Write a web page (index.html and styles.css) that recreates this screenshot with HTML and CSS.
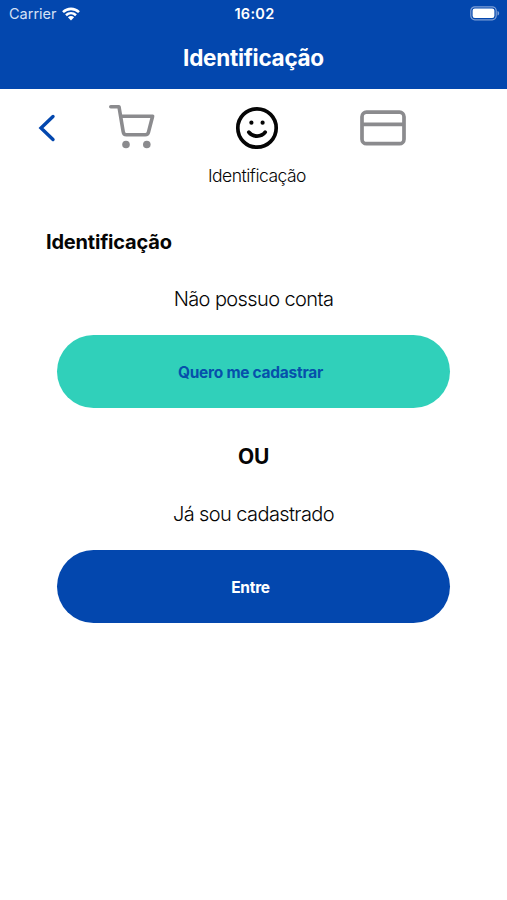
FILE: index.html
```html
<!DOCTYPE html>
<html lang="pt-BR">
<head>
<meta charset="utf-8">
<meta name="viewport" content="width=device-width, initial-scale=1">
<title>Identificação</title>
<link rel="stylesheet" href="styles.css">
</head>
<body>
<header class="header">
  <div class="status">
    <div class="carrier"><span>Carrier</span>
      <svg width="18" height="14" viewBox="0 0 18 14" fill="none" stroke="#fff" stroke-width="2.6"><path d="M1 5.1C5.6.8 12.4.8 17 5.1M4 8.2c2.9-2.6 7.1-2.6 10 0"/><path d="M5.9 10.2c1.8-1.5 4.4-1.5 6.2 0L9 13.5z" fill="#fff" stroke="none"/></svg>
    </div>
    <time class="time">16:02</time>
    <svg class="battery" width="30" height="15" viewBox="0 0 30 15"><rect x=".8" y=".8" width="25.4" height="13" rx="4" fill="none" stroke="#7f9fd6" stroke-width="1.2"/><rect x="2.6" y="2.6" width="21.8" height="9.4" rx="2.2" fill="#fff"/><path d="M27.5 5c2.2.7 2.2 3.9 0 4.6z" fill="#7f9fd6"/></svg>
  </div>
  <h1 class="title">Identificação</h1>
</header>
<nav class="steps">
  <a class="back" aria-label="Voltar"><svg width="18" height="28" viewBox="0 0 18 28" fill="none" stroke="#0347ae" stroke-width="3.4" stroke-linecap="round"><path d="M15 2.5L3 14l12 11.5"/></svg></a>
  <svg class="cart" width="48" height="46" viewBox="0 0 48 46" fill="none" stroke="#8b8b8e" stroke-width="3.6" stroke-linecap="round" stroke-linejoin="round"><path d="M2.8 2.8H11l4.2 25c.3 2 1.3 3 3.2 3H37.200c1.900 0 2.900-.9 3.300-2.700l4.100-15.800H12.600"/><g fill="#8b8b8e" stroke="none"><circle cx="18" cy="40.5" r="3.8"/><circle cx="38.8" cy="40.5" r="3.8"/></g></svg>
  <div class="current">
    <svg width="44" height="44" viewBox="0 0 44 44" fill="none" stroke="#050505" stroke-width="3.7" stroke-linecap="round"><circle cx="22" cy="22" r="19.2"/><path d="M13.8 26.2c3.8 5.2 12.6 5.2 16.4 0"/><g fill="#050505" stroke="none"><circle cx="16.4" cy="16.7" r="2.1"/><circle cx="27.6" cy="16.7" r="2.1"/></g></svg>
    <span class="label">Identificação</span>
  </div>
  <svg class="card" width="46" height="36" viewBox="0 0 46 36" fill="none" stroke="#8b8b8e" stroke-width="3.7"><rect x="2" y="2.2" width="42" height="31.5" rx="4.5"/><path d="M2 14.3h42"/></svg>
</nav>
<main class="content">
  <h2 class="heading">Identificação</h2>
  <p class="text first">Não possuo conta</p>
  <button class="button signup"><span>Quero me cadastrar</span></button>
  <p class="or">OU</p>
  <p class="text second">Já sou cadastrado</p>
  <button class="button login"><span>Entre</span></button>
</main>
</body>
</html>
```
FILE: styles.css
```css
* { box-sizing: border-box; }
body { margin: 0; background: #fff; color: #050505; font-family: Inter, "Liberation Sans", sans-serif; }
svg { display: block; flex: none; }
h1, h2, p { margin: 0; white-space: nowrap; }
.header { height: 89px; background: #0347ae; color: #fff; }
.status { height: 27px; display: grid; grid-template-columns: 1fr auto 1fr; align-items: center; padding: 0 7px 0 9px; }
.carrier { display: flex; align-items: center; gap: 5px; font-size: 14.5px; color: #d5e1f5; }
.time { font-size: 14.5px; font-weight: 600; letter-spacing: .3px; }
.battery { justify-self: end; }
.title { text-align: center; font-size: 22.5px; line-height: 61px; font-weight: 700; letter-spacing: -.27px; }
.steps { height: 111px; display: grid; grid-template-columns: 108px 100px 98px 1fr; align-items: start; }
.back { padding: 25px 0 0 38px; }
.cart { margin: 15px 0 0; }
.current { display: flex; flex-direction: column; align-items: center; padding-top: 17px; }
.label { margin-top: 14px; font-size: 17.5px; line-height: 24px; font-weight: 300; letter-spacing: -.5px; white-space: nowrap; }
.card { margin: 21px 0 0 54px; }
.content { display: flex; flex-direction: column; padding: 28px 57px 0; }
.heading { margin-left: -11px; font-size: 20px; line-height: 28px; font-weight: 700; letter-spacing: -.2px; }
.text { text-align: center; font-size: 20px; line-height: 28px; font-weight: 300; letter-spacing: -.6px; }
.first { margin-top: 29px; }
.button { height: 73px; border: 0; border-radius: 37px; padding: 2px 6px 0 0; font: 700 15.5px/24px Inter, "Liberation Sans", sans-serif; letter-spacing: -.27px; }
.signup { margin-top: 22px; background: #30d0ba; color: #0650ab; }
.login { margin-top: 22px; background: #0347ae; color: #fff; }
.or { margin-top: 34px; text-align: center; font-size: 21px; line-height: 30px; font-weight: 700; letter-spacing: -.3px; }
.second { margin-top: 28px; }
```
